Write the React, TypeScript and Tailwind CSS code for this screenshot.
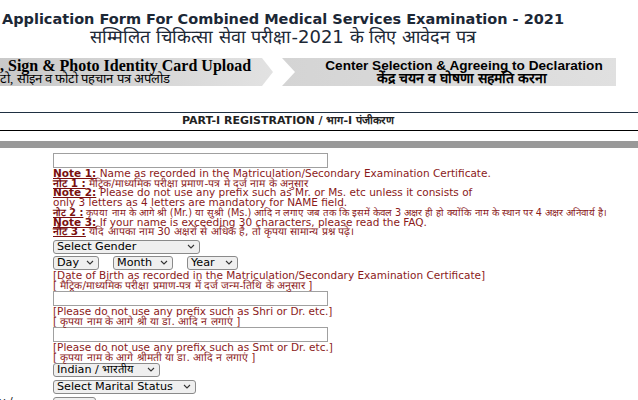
import type { ReactNode } from 'react'

const maroon = 'text-[#8b1a1a]'

function Chevron() {
  return (
    <svg width="8" height="5" viewBox="0 0 8 5" className="shrink-0">
      <path d="M1 1 L4 4 L7 1" fill="none" stroke="#333" strokeWidth="1.1" />
    </svg>
  )
}

function FakeSelect({ label, width, className = '' }: { label: string; width: string; className?: string }) {
  return (
    <div
      className={`${width} ${className} h-[14px] flex items-center justify-between pl-[3px] pr-[4px] rounded-[3px] border border-[#8a8a8a] bg-[#efefef] text-[11.2px] leading-none text-black`}
    >
      <span className="whitespace-nowrap">{label}</span>
      <Chevron />
    </div>
  )
}

function TextBox({ className = '' }: { className?: string }) {
  return <div className={`w-[275px] h-[15px] border border-[#a0a0a0] bg-white ${className}`} />
}

function Note({ label, children, className = '' }: { label: string; children: ReactNode; className?: string }) {
  return (
    <div className={`whitespace-nowrap ${className}`}>
      <span className="font-bold underline text-[#7a1010]">{label}</span> {children}
    </div>
  )
}

export default function App() {
  return (
    <div className="w-[638px] h-[400px] overflow-hidden bg-white font-['DejaVu_Sans',Verdana,sans-serif]">
      {/* Title */}
      <div className="w-[566px] pt-[11px] text-center text-[#1c2836]">
        <h1 className="text-[14.5px] font-bold leading-[17px] whitespace-nowrap">
          Application Form For Combined Medical Services Examination - 2021
        </h1>
        <div className="text-[18px] leading-[17px] whitespace-nowrap">
          सम्मिलित चिकित्सा सेवा परीक्षा-2021 के लिए आवेदन पत्र
        </div>
      </div>

      {/* Steps */}
      <div className="mt-[13px] flex h-[28px]">
        <div className="w-[273px] h-full bg-gradient-to-r from-[#c9c9c9] to-[#e2e2e2] [clip-path:polygon(0_0,262px_0,273px_50%,262px_100%,0_100%)] font-['Liberation_Serif',serif] text-black leading-[13px] pt-[1px]">
          <div className="text-[16px] font-bold whitespace-nowrap">, Sign &amp; Photo Identity Card Upload</div>
          <div className="text-[13px] whitespace-nowrap">टो, साइन व फोटो पहचान पत्र अपलोड</div>
        </div>
        <div className="ml-[9px] w-[334px] h-full bg-gradient-to-r from-[#d4d4d4] to-[#e0e0e0] [clip-path:polygon(0_0,100%_0,100%_100%,0_100%,13px_50%)] font-['Liberation_Sans',Arial,sans-serif] text-black text-center leading-[13px] pt-[1px]">
          <div className="text-[13.6px] font-bold whitespace-nowrap pl-[30px]">Center Selection &amp; Agreeing to Declaration</div>
          <div className="text-[14px] font-semibold whitespace-nowrap pl-[26px]">केंद्र चयन व घोषणा सहमति करना</div>
        </div>
      </div>

      {/* Section header */}
      <div className="mt-[26px] border-t border-[#1f3042] border-b border-b-black h-[19px] flex items-center justify-center pr-[62px]">
        <span className="text-[11px] font-bold text-[#222] whitespace-nowrap">PART-I REGISTRATION / भाग-I पंजीकरण</span>
      </div>
      <div className="mt-[10px] h-[7px] bg-[#999999]" />

      {/* Form */}
      <div className="pl-[53px] pt-[5px] text-[10.5px] leading-[9.7px]">
        <TextBox />
        <div className={`${maroon} mt-[1px]`}>
          <Note label="Note 1:">Name as recorded in the Matriculation/Secondary Examination Certificate.</Note>
          <Note label="नोट 1 :">मैट्रिक/माध्यमिक परीक्षा प्रमाण-पत्र मे दर्ज नाम के अनुसार</Note>
          <Note label="Note 2:">Please do not use any prefix such as Mr. or Ms. etc unless it consists of</Note>
          <div className="whitespace-nowrap">only 3 letters as 4 letters are mandatory for NAME field.</div>
          <Note label="नोट 2 :" className="text-[9.7px]">
            कृपया नाम के आगे श्री (Mr.) या सुश्री (Ms.) आदि न लगाए जब तक कि इसमें केवल 3 अक्षर ही हो क्योंकि नाम के स्थान पर 4 अक्षर अनिवार्य है।
          </Note>
          <Note label="Note 3:">If your name is exceeding 30 characters, please read the FAQ.</Note>
          <Note label="नोट 3 :">यदि आपका नाम 30 अक्षरों से अधिक है, तो कृपया सामान्य प्रश्न पढ़े।</Note>
        </div>

        <FakeSelect label="Select Gender" width="w-[147px]" className="mt-[3px]" />
        <div className="mt-[2px] flex gap-[14px]">
          <FakeSelect label="Day" width="w-[46px]" />
          <FakeSelect label="Month" width="w-[60px]" />
          <FakeSelect label="Year" width="w-[51px]" />
        </div>
        <div className={`${maroon} leading-[10.5px]`}>
          <div className="whitespace-nowrap">[Date of Birth as recorded in the Matriculation/Secondary Examination Certificate]</div>
          <div className="whitespace-nowrap">[ मैट्रिक/माध्यमिक परीक्षा प्रमाण-पत्र में दर्ज जन्म-तिथि के अनुसार ]</div>
        </div>

        <TextBox />
        <div className={`${maroon} leading-[10.5px]`}>
          <div className="whitespace-nowrap">[Please do not use any prefix such as Shri or Dr. etc.]</div>
          <div className="whitespace-nowrap">[ कृपया नाम के आगे श्री या डा. आदि न लगाएं ]</div>
        </div>

        <TextBox />
        <div className={`${maroon} leading-[10px]`}>
          <div className="whitespace-nowrap">[Please do not use any prefix such as Smt or Dr. etc.]</div>
          <div className="whitespace-nowrap">[ कृपया नाम के आगे श्रीमती या डा. आदि न लगाएं ]</div>
        </div>

        <FakeSelect label="Indian / भारतीय" width="w-[107px]" className="mt-[1px]" />
        <FakeSelect label="Select Marital Status" width="w-[143px]" className="mt-[3px]" />
        <div className="mt-[3px] flex items-start">
          <span className="-ml-[55px] w-[55px] pl-[1px] text-[11px] leading-[9px] text-[#222] whitespace-nowrap">y /</span>
          <FakeSelect label="" width="w-[43px]" />
        </div>
      </div>
    </div>
  )
}
